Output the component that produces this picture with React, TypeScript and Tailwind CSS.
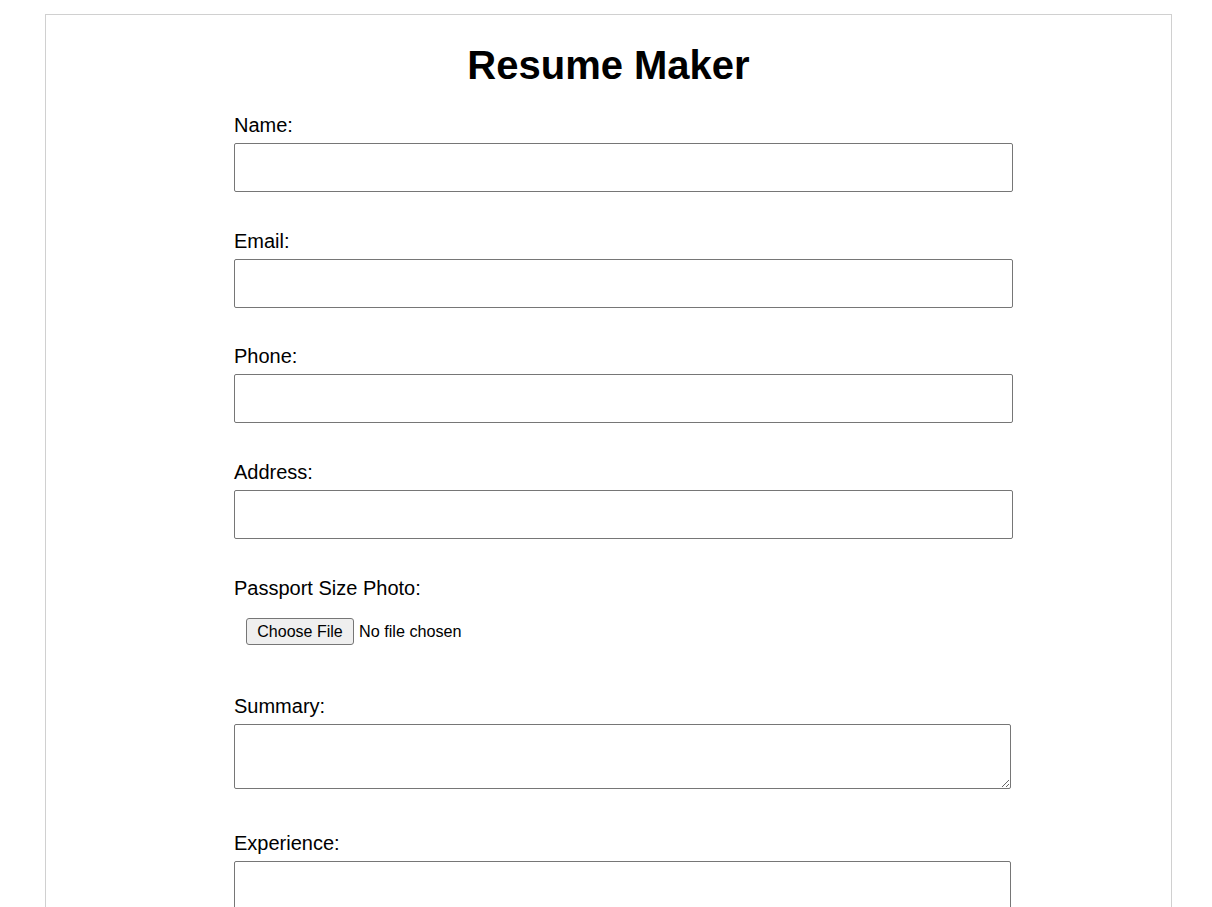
import React from "react";

function Field({ label, type = "text" }: { label: string; type?: string }) {
  return (
    <div className="mb-[36.67px]">
      <label className="mb-[6px] block text-[20px] leading-[24px]">{label}</label>
      <input
        type={type}
        className="block h-[49px] w-[779px] rounded-[2px] border border-[#767676] bg-white px-[10px] text-[16px] outline-none"
      />
    </div>
  );
}

function Area({ label, mb, lmb }: { label: string; mb: string; lmb: string }) {
  return (
    <div className={mb}>
      <label className={`${lmb} block text-[20px] leading-[24px]`}>{label}</label>
      <textarea className="block h-[65px] w-[777px] rounded-[2px] border border-[#767676] bg-white px-[10px] py-[8px] text-[16px] outline-none" />
    </div>
  );
}

export default function App() {
  return (
    <div className="h-[907px] overflow-hidden bg-white font-['Liberation_Sans',Arial,sans-serif] text-black">
      <div className="ml-[45px] mt-[14px] w-[1127px] border border-[#d0d0d0] pb-10 pt-[27px]">
        <h1 className="text-center text-[40px] font-bold leading-[46px]">Resume Maker</h1>
        <form className="ml-[188px] mt-[25px] w-[779px]">
          <Field label="Name:" />
          <Field label="Email:" type="email" />
          <Field label="Phone:" type="tel" />
          <Field label="Address:" />
          <div className="mb-[39.33px]">
            <label className="mb-[6px] block text-[20px] leading-[24px]">Passport Size Photo:</label>
            <label className="flex h-[49px] items-start pl-[12px] pt-[12px] text-[16px]">
              <input type="file" className="hidden" />
              <span className="flex h-[27px] w-[108px] items-center justify-center rounded-[3px] border border-[#767676] bg-[#efefef] pt-[1px] leading-[18px]">
                Choose File
              </span>
              <span className="ml-[5px] flex h-[27px] items-center text-[16.2px] leading-[18px]">No file chosen</span>
            </label>
          </div>
          <Area label="Summary:" mb="mb-[42px]" lmb="mb-[6px]" />
          <Area label="Experience:" mb="mb-[42px]" lmb="mb-[6px]" />
          <Area label="Education:" mb="mb-[42px]" lmb="mb-[6px]" />
          <Area label="Skills:" mb="mb-[42px]" lmb="mb-[6px]" />
        </form>
      </div>
    </div>
  );
}
